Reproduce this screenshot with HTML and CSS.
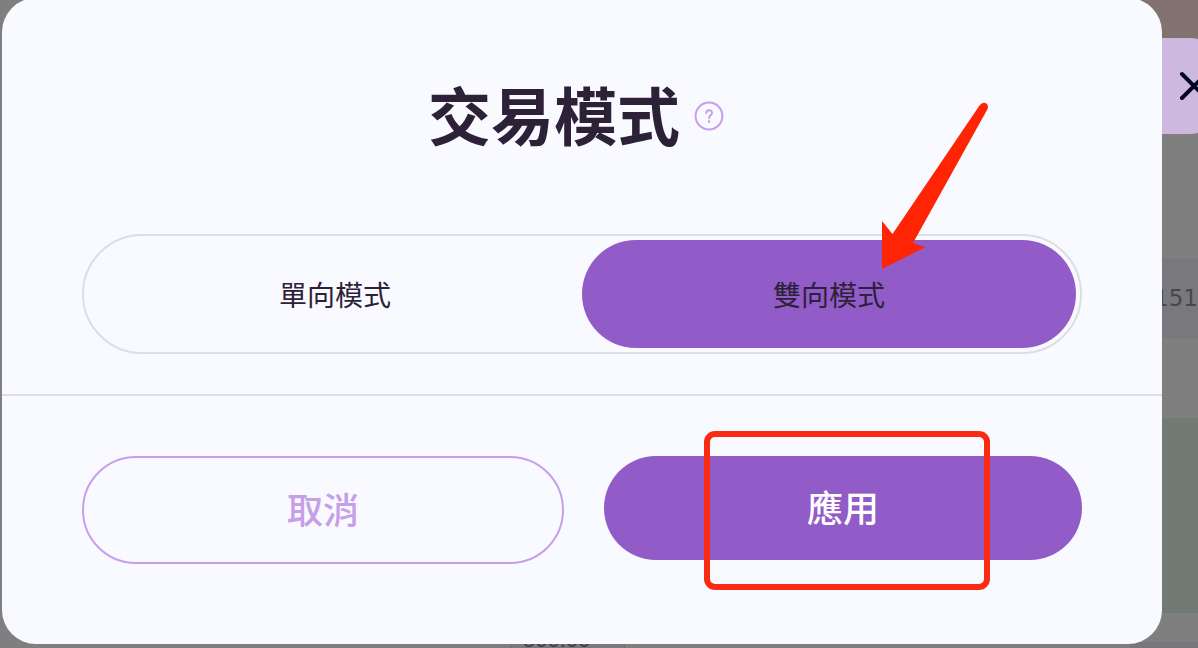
FILE: index.html
```html
<!DOCTYPE html>
<html lang="zh-Hant">
<head>
<meta charset="utf-8">
<title>交易模式</title>
<link rel="stylesheet" href="styles.css">
</head>
<body>
<div class="backdrop">
  <div class="backdrop-main"><span class="amount">500.00</span></div>
  <div class="backdrop-side">
    <div class="band band-top"></div>
    <button class="close" type="button" aria-label="關閉">
      <svg width="32" height="32" viewBox="0 0 32 32" fill="none" stroke="#020424" stroke-width="4" stroke-linecap="round"><path d="M4 4 28 28M28 4 4 28"/></svg>
    </button>
    <div class="band band-gap"></div>
    <div class="band band-price">151</div>
    <div class="band band-space"></div>
    <div class="band band-chart"></div>
    <div class="band band-end"></div>
  </div>
</div>
<main class="dialog" role="dialog" aria-labelledby="dialog-title">
  <header class="dialog-header">
    <h1 id="dialog-title">交易模式</h1>
    <button class="help" type="button" aria-label="說明">
      <svg width="30" height="30" viewBox="0 0 30 30" fill="none" stroke="#c79fe9"><circle cx="15" cy="15" r="13.4" stroke-width="2"/><path d="M12.2 12C12.2 8.300 18 8.300 18 11.900C18 14.300 15.100 14.300 15.100 17" stroke-width="2" stroke-linecap="round"/><circle cx="15.1" cy="20.600" r="1.300" fill="#c79fe9" stroke="none"/></svg>
    </button>
  </header>
  <div class="modes">
    <button class="mode" type="button" aria-pressed="false">單向模式</button>
    <button class="mode mode-active" type="button" aria-pressed="true">雙向模式</button>
  </div>
  <footer class="actions">
    <button class="action action-cancel" type="button">取消</button>
    <button class="action action-apply" type="button">應用</button>
  </footer>
  <svg class="arrow" width="110" height="170" viewBox="5 0 110 170" fill="#ff2404" aria-hidden="true"><path d="M104.500 5.500Q108 1 112 4Q114 7 112 10L38 143L50.500 147L7 169L7 121L17.500 134Z"/></svg>
  <div class="highlight" aria-hidden="true"></div>
</main>
</body>
</html>
```
FILE: styles.css
```css
html, body {
  height: 100%;
}

body {
  margin: 0;
  overflow: hidden;
  position: relative;
  background: #7f7f7f;
  color: #2d2138;
  font-family: "Noto Sans CJK TC", "Liberation Sans", sans-serif;
}

button {
  margin: 0;
  padding: 0;
  border: 0;
  background: transparent;
  color: inherit;
  font-family: inherit;
  cursor: pointer;
}

svg {
  display: block;
}

.backdrop {
  display: flex;
  height: 100%;
}

.backdrop-main {
  flex: 1;
  display: flex;
  align-items: flex-end;
}

.amount {
  margin: 0 0 -2px 510px;
  padding: 0 34px 0 12px;
  border: 1px solid #6e6e74;
  border-width: 0 1px;
  background: #79797e;
  color: #3c3c44;
  font: 22px/20px "Liberation Sans", sans-serif;
}

.backdrop-side {
  width: 68px;
  display: flex;
  flex-direction: column;
  overflow: hidden;
}

.band {
  flex: none;
}

.band-top {
  height: 38px;
  background: #827270;
}

.close {
  flex: none;
  width: 84px;
  height: 96px;
  padding-left: 48px;
  border-radius: 24px;
  background: #cdb8e0;
}

.band-gap {
  height: 124px;
}

.band-price {
  height: 80px;
  padding-left: 24px;
  background: #79797d;
  color: #47474f;
  font: 23px/80px "DejaVu Sans", sans-serif;
}

.band-space {
  height: 80px;
}

.band-chart {
  height: 195px;
  background: #717a74;
}

.band-end {
  height: 29px;
  border-bottom: 6px solid #77777a;
}

.dialog {
  position: absolute;
  top: -2px;
  left: 2px;
  right: 36px;
  border-radius: 34px;
  background: #f8faff;
}

.dialog-header {
  display: flex;
  justify-content: center;
  align-items: center;
  gap: 14px;
  padding: 67px 12px 73px 0;
}

.dialog-header h1 {
  margin: 0;
  font-size: 63px;
  line-height: 96px;
  font-weight: 700;
}

.help {
  padding-top: 6px;
}

.modes {
  display: flex;
  margin: 0 80px 40px;
  padding: 4px;
  border: 2px solid #dddde3;
  border-radius: 60px;
}

.mode {
  flex: 1;
  height: 108px;
  border-radius: 54px;
  font-size: 28px;
}

.mode-active {
  background: #915bc8;
}

.actions {
  display: flex;
  align-items: flex-start;
  gap: 40px;
  padding: 60px 80px 80px;
  border-top: 2px solid #dddde3;
}

.action {
  box-sizing: content-box;
  flex: 1;
  height: 100px;
  padding-bottom: 4px;
  border-radius: 54px;
  font-size: 36px;
  font-weight: 500;
}

.action-cancel {
  border: 2px solid #c79fe9;
  color: #c79fe9;
}

.action-apply {
  background: #915bc8;
  color: #fff;
}

.arrow {
  position: absolute;
  top: 102px;
  right: 172px;
}

.highlight {
  position: absolute;
  box-sizing: border-box;
  top: 433px;
  right: 172px;
  width: 286px;
  height: 159px;
  border: 6px solid #fb2a12;
  border-radius: 11px;
}
```
